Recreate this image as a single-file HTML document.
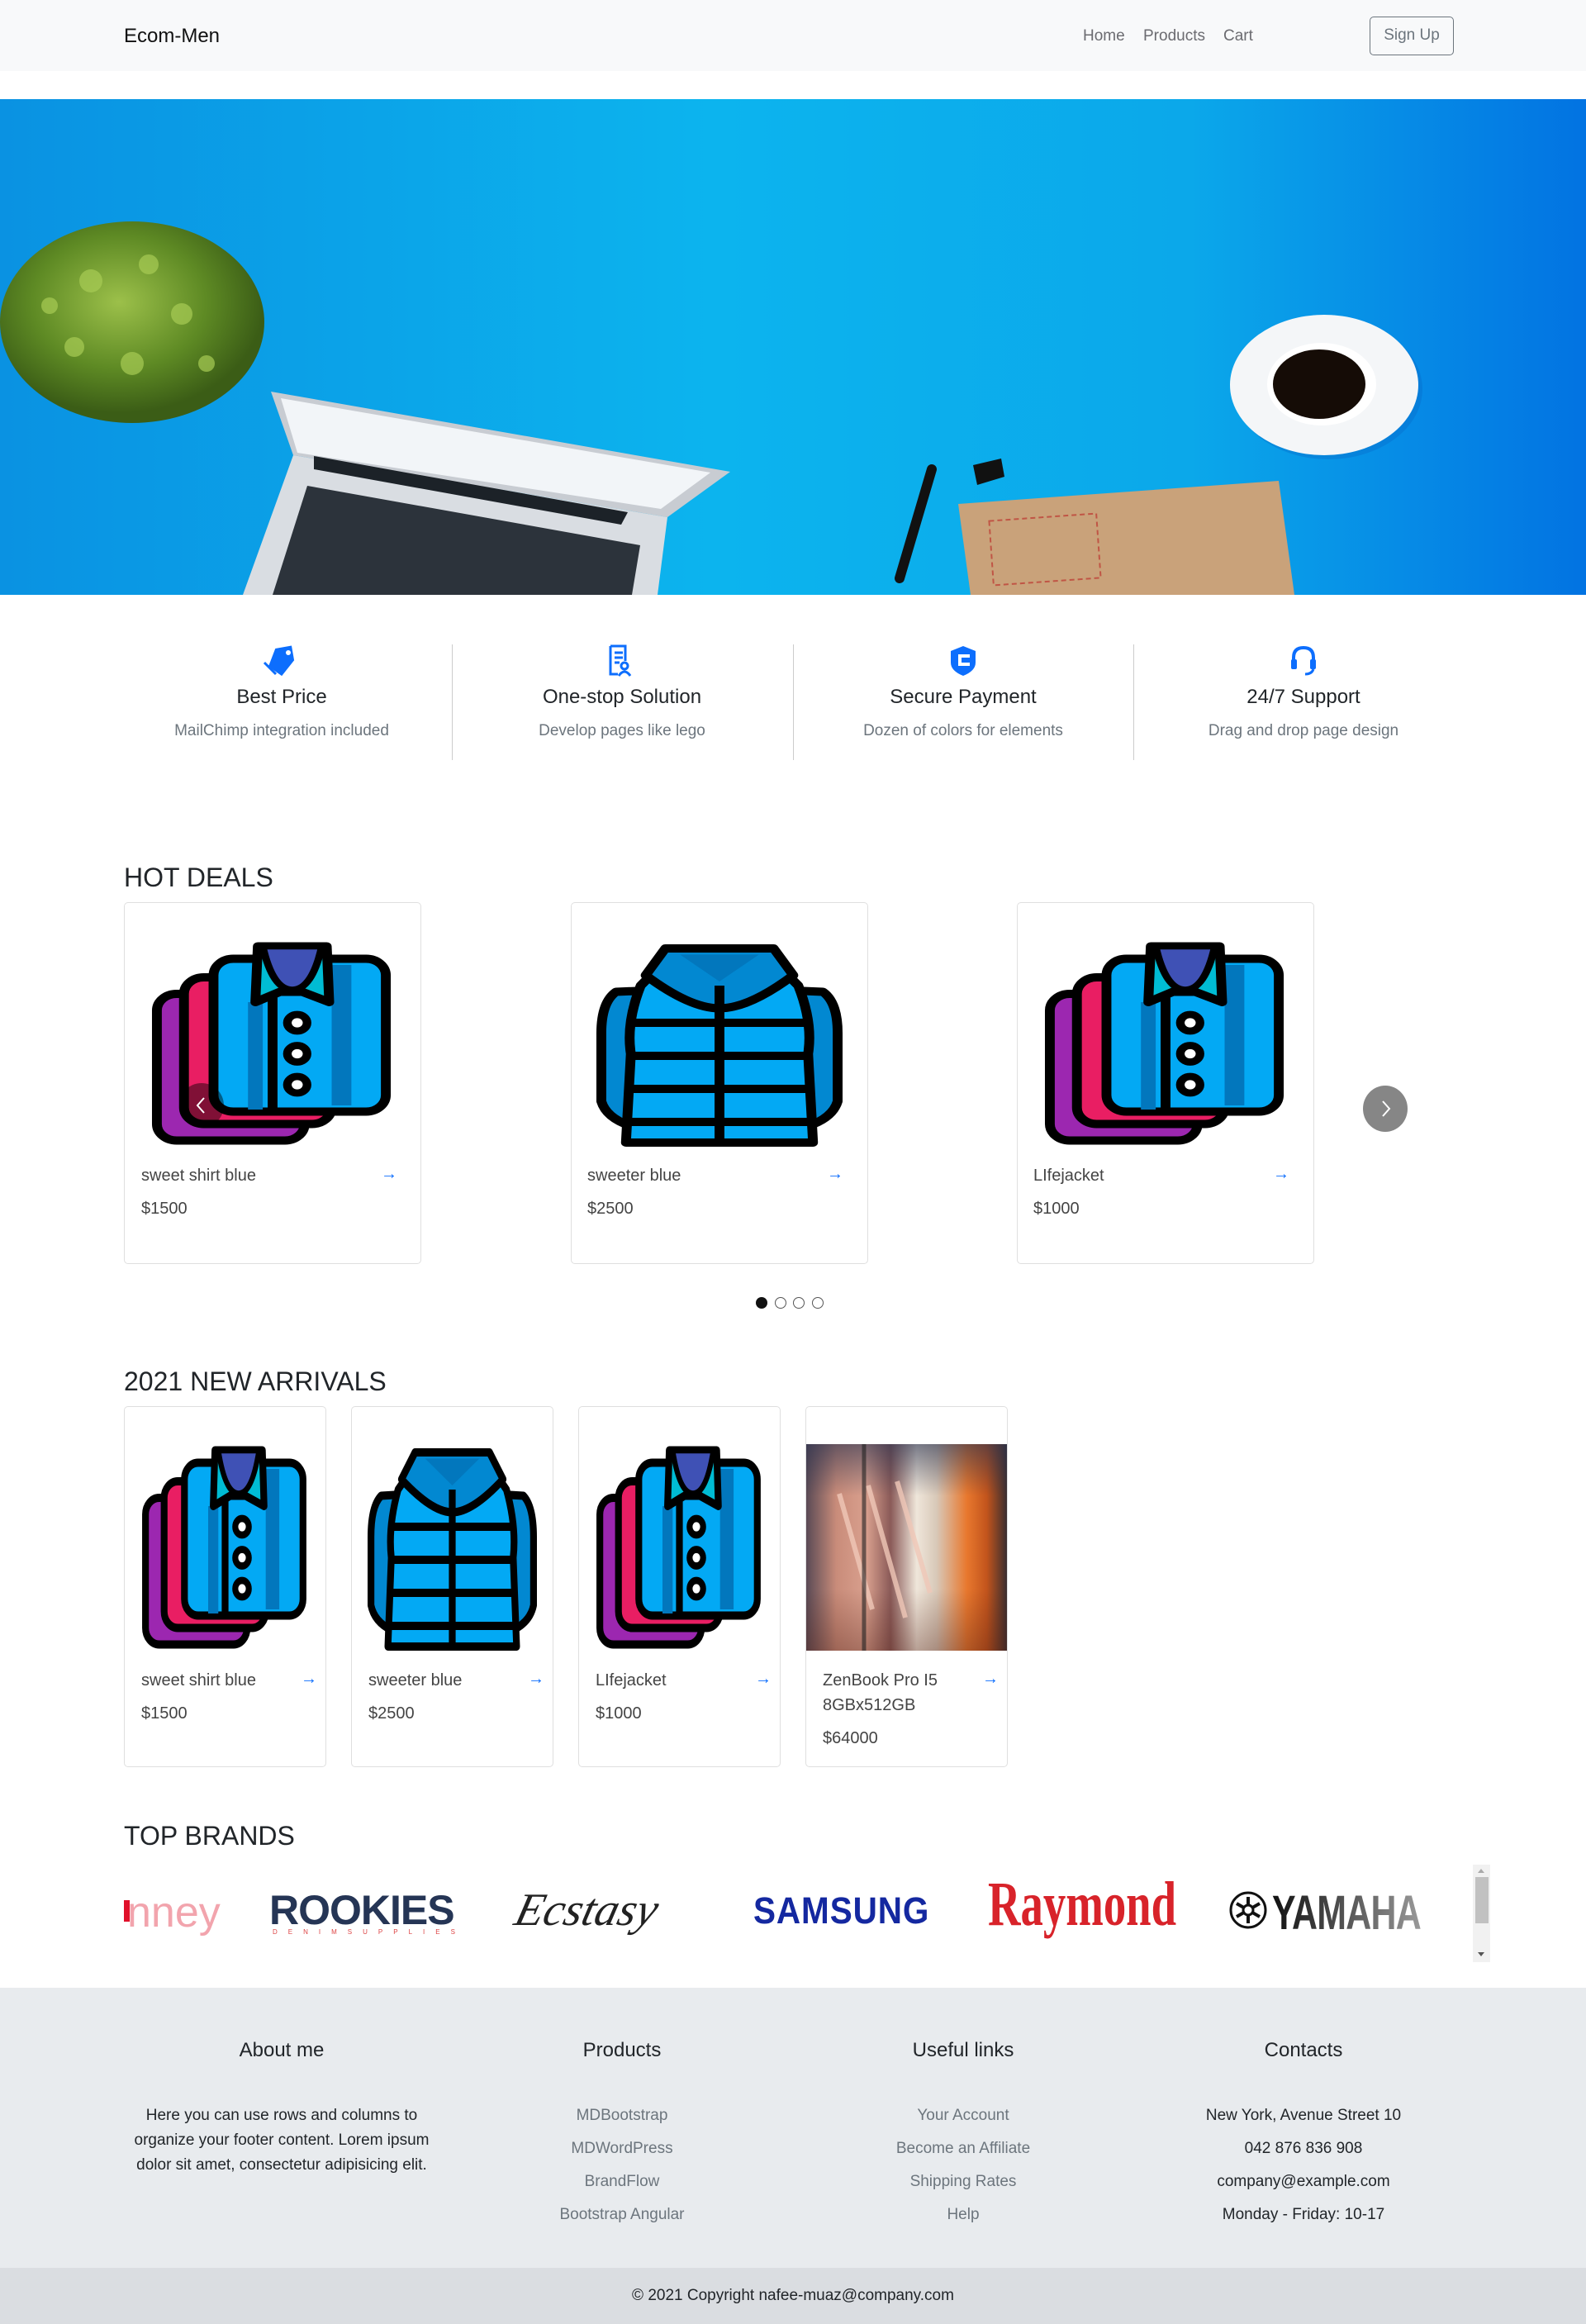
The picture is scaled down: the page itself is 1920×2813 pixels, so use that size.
<!DOCTYPE html>
<html><head><meta charset="utf-8"><style>
*{box-sizing:border-box;margin:0;padding:0}
body{width:1920px;height:2813px;position:relative;background:#fff;font-family:"Liberation Sans",sans-serif;color:#212529;overflow:hidden}
.a{position:absolute}
.nav{left:0;top:0;width:1920px;height:86px;background:#f8f9fa}
.t{white-space:nowrap}
.card{position:absolute;border:1px solid #dfdfdf;border-radius:5px;background:#fff}
.ttl{position:absolute;font-size:20px;color:#444}
.arr{position:absolute;font-size:20px;color:#0d6efd}
.h2{position:absolute;left:150px;font-size:32px;font-weight:500;color:#212529}
.fh{position:absolute;font-size:24px;text-align:center;width:412px;color:#212529}
.fp{position:absolute;font-size:19px;text-align:center;width:412px;color:#6c757d}
.foot{position:absolute;width:412px;text-align:center;font-size:19px;line-height:40px}
</style></head><body>
<svg width="0" height="0" style="position:absolute">
<defs>
<symbol id="shirt" viewBox="0 0 100 100" preserveAspectRatio="none">
<rect x="3" y="26" width="60" height="71" rx="8" fill="#9c27b0" stroke="#000" stroke-width="4"/>
<rect x="14" y="18" width="60" height="71" rx="8" fill="#e91e63" stroke="#000" stroke-width="4"/>
<rect x="26" y="9" width="70" height="74" rx="8" fill="#03a9f4" stroke="#000" stroke-width="4"/>
<rect x="74" y="12" width="8" height="68" fill="#0277bd"/>
<rect x="40" y="30" width="6" height="52" fill="#0277bd"/>
<path d="M44 3 L43 30 L53 25 L62 25 L73 30 L72 3 Z" fill="#00bcd4" stroke="#000" stroke-width="4" stroke-linejoin="round"/>
<path d="M46 3 Q50 24 58 24 Q66 24 70 3 Z" fill="#3f51b5" stroke="#000" stroke-width="3"/>
<line x1="50" y1="27" x2="50" y2="83" stroke="#000" stroke-width="4"/>
<circle cx="60" cy="40" r="4" fill="#fff" stroke="#000" stroke-width="3.5"/>
<circle cx="60" cy="55" r="4" fill="#fff" stroke="#000" stroke-width="3.5"/>
<circle cx="60" cy="70" r="4" fill="#fff" stroke="#000" stroke-width="3.5"/>
</symbol>
<symbol id="jacket" viewBox="0 0 100 100" preserveAspectRatio="none">
<path d="M8 25 Q2 30 2 45 L2 78 Q4 86 14 90 L28 93 L28 24 Z" fill="#0288d1" stroke="#000" stroke-width="4" stroke-linejoin="round"/>
<path d="M92 25 Q98 30 98 45 L98 78 Q96 86 86 90 L72 93 L72 24 Z" fill="#0288d1" stroke="#000" stroke-width="4" stroke-linejoin="round"/>
<path d="M28 10 L72 10 L82 22 Q88 40 86 55 L88 98 L12 98 L14 55 Q12 40 18 22 Z" fill="#03a9f4" stroke="#000" stroke-width="4" stroke-linejoin="round"/>
<path d="M28 4 L72 4 L80 17 Q62 33 50 33 Q38 33 20 17 Z" fill="#0288d1" stroke="#000" stroke-width="4" stroke-linejoin="round"/>
<path d="M34 7 L66 7 L50 20 Z" fill="#0277bd"/>
<line x1="50" y1="22" x2="50" y2="98" stroke="#000" stroke-width="4"/>
<line x1="14" y1="40" x2="86" y2="40" stroke="#000" stroke-width="4"/>
<line x1="14" y1="56" x2="86" y2="56" stroke="#000" stroke-width="4"/>
<line x1="14" y1="72" x2="86" y2="72" stroke="#000" stroke-width="4"/>
<line x1="12" y1="88" x2="88" y2="88" stroke="#000" stroke-width="4"/>
</symbol>
</defs></svg>

<div class="a nav"></div>
<div class="a t" style="left:150px;top:30px;font-size:24px;color:#111">Ecom-Men</div>
<div class="a t" style="left:1311px;top:33px;font-size:19px;color:#6b6b70">Home</div>
<div class="a t" style="left:1384px;top:33px;font-size:19px;color:#6b6b70">Products</div>
<div class="a t" style="left:1481px;top:33px;font-size:19px;color:#6b6b70">Cart</div>
<div class="a" style="left:1658px;top:20px;width:102px;height:47px;border:1.5px solid #6c757d;border-radius:5px;font-size:19px;color:#6c757d;text-align:center;line-height:44px">Sign Up</div>

<!-- hero -->
<div class="a" style="left:0;top:120px;width:1920px;height:600px;background:linear-gradient(90deg,#0a92e2 0%,#0cb4ee 45%,#0ba8ea 75%,#0273e2 100%)"></div>
<svg class="a" style="left:0;top:120px" width="1920" height="600">
<defs><radialGradient id="pl" cx="45%" cy="40%" r="55%"><stop offset="0" stop-color="#9cc04a"/><stop offset=".6" stop-color="#5e8a24"/><stop offset="1" stop-color="#3b5d16"/></radialGradient></defs>
<ellipse cx="175" cy="300" rx="100" ry="45" fill="#0a6fc0" opacity=".35"/>
<ellipse cx="160" cy="270" rx="160" ry="122" fill="url(#pl)"/>
<g fill="#a8cc55" opacity=".7"><circle cx="110" cy="220" r="14"/><circle cx="180" cy="200" r="12"/><circle cx="220" cy="260" r="13"/><circle cx="90" cy="300" r="12"/><circle cx="160" cy="320" r="14"/><circle cx="250" cy="320" r="10"/><circle cx="60" cy="250" r="10"/></g>
<polygon points="328,354 884,451 808,506 355,431" fill="#c8ccd2"/>
<polygon points="340,362 860,452 800,496 360,428" fill="#f2f5f8"/>
<g fill="#2a8fd8"><rect x="420" y="400" width="18" height="28" transform="skewY(10)"/><rect x="470" y="410" width="18" height="28" transform="skewY(10)"/><rect x="520" y="420" width="18" height="28" transform="skewY(10)"/></g>
<polygon points="355,431 808,506 796,600 294,600" fill="#d9dde2"/>
<polygon points="372,468 775,540 765,600 330,600" fill="#2c333b"/>
<polygon points="380,432 760,500 752,515 380,448" fill="#1c2228"/>
<line x1="1128" y1="448" x2="1089" y2="580" stroke="#111" stroke-width="12" stroke-linecap="round"/>
<polygon points="1178,443 1212,435 1216,457 1183,467" fill="#111"/>
<ellipse cx="1608" cy="351" rx="114" ry="85" fill="#0867c7" opacity=".35"/>
<ellipse cx="1603" cy="346" rx="114" ry="85" fill="#f4f6f8"/>
<ellipse cx="1600" cy="345" rx="66" ry="50" fill="#fff"/>
<ellipse cx="1597" cy="345" rx="56" ry="42" fill="#150c06"/>
<polygon points="1160,490 1548,462 1567,600 1175,600" fill="#c9a27a"/>
<rect x="1200" y="506" width="130" height="78" fill="none" stroke="#c05545" stroke-width="2" stroke-dasharray="6 4" transform="rotate(-4 1265 545)"/>
</svg>

<!-- features -->
<div class="a" style="left:547px;top:780px;width:1px;height:140px;background:#ccc"></div>
<div class="a" style="left:960px;top:780px;width:1px;height:140px;background:#ccc"></div>
<div class="a" style="left:1372px;top:780px;width:1px;height:140px;background:#ccc"></div>
<svg class="a" style="left:318px;top:780px" width="44" height="40" viewBox="0 0 44 40"><path d="M18 4 L38 4 L38 22 L20 38 L6 24 Z" fill="#0d6efd" transform="rotate(-10 22 20)"/><circle cx="31" cy="10" r="3" fill="#fff"/><path d="M2 22 L16 36" stroke="#0d6efd" stroke-width="3"/></svg>
<svg class="a" style="left:736px;top:780px" width="30" height="40" viewBox="0 0 30 40"><path d="M3 2 H21 V20 M12 36 H3 V2" fill="none" stroke="#0d6efd" stroke-width="3"/><path d="M8 10h10M8 16h10M8 22h6" stroke="#0d6efd" stroke-width="3"/><circle cx="20" cy="26" r="4" fill="none" stroke="#0d6efd" stroke-width="3"/><path d="M13 38 Q20 28 27 38" fill="none" stroke="#0d6efd" stroke-width="3"/></svg>
<svg class="a" style="left:1148px;top:780px" width="36" height="40" viewBox="0 0 36 40"><path d="M18 2 L33 8 L33 22 Q33 32 18 38 Q3 32 3 22 L3 8 Z" fill="#0d6efd"/><path d="M26 14 H14 V24 H26" fill="none" stroke="#fff" stroke-width="4"/></svg>
<svg class="a" style="left:1560px;top:780px" width="36" height="40" viewBox="0 0 36 40"><path d="M6 22 V16 Q6 4 18 4 Q30 4 30 16 V22" fill="none" stroke="#0d6efd" stroke-width="4"/><rect x="3" y="18" width="7" height="12" rx="2" fill="#0d6efd"/><rect x="26" y="18" width="7" height="12" rx="2" fill="#0d6efd"/><path d="M30 30 Q28 36 20 36" fill="none" stroke="#0d6efd" stroke-width="3"/></svg>
<div class="fh" style="left:135px;top:830px">Best Price</div>
<div class="fh" style="left:547px;top:830px">One-stop Solution</div>
<div class="fh" style="left:960px;top:830px">Secure Payment</div>
<div class="fh" style="left:1372px;top:830px">24/7 Support</div>
<div class="fp" style="left:135px;top:874px">MailChimp integration included</div>
<div class="fp" style="left:547px;top:874px">Develop pages like lego</div>
<div class="fp" style="left:960px;top:874px">Dozen of colors for elements</div>
<div class="fp" style="left:1372px;top:874px">Drag and drop page design</div>

<!-- hot deals -->
<div class="h2" style="top:1044px">HOT DEALS</div>
<div class="card" style="left:150px;top:1092px;width:360px;height:438px"></div>
<div class="card" style="left:691px;top:1092px;width:360px;height:438px"></div>
<div class="card" style="left:1231px;top:1092px;width:360px;height:438px"></div>
<svg class="a" style="left:181px;top:1138px" width="298" height="250"><use href="#shirt"/></svg>
<svg class="a" style="left:722px;top:1138px" width="298" height="250"><use href="#jacket"/></svg>
<svg class="a" style="left:1262px;top:1138px" width="298" height="250"><use href="#shirt"/></svg>
<div class="ttl" style="left:171px;top:1412px">sweet shirt blue</div><div class="arr" style="left:461px;top:1410px">→</div>
<div class="ttl" style="left:171px;top:1452px">$1500</div>
<div class="ttl" style="left:711px;top:1412px">sweeter blue</div><div class="arr" style="left:1001px;top:1410px">→</div>
<div class="ttl" style="left:711px;top:1452px">$2500</div>
<div class="ttl" style="left:1251px;top:1412px">LIfejacket</div><div class="arr" style="left:1541px;top:1410px">→</div>
<div class="ttl" style="left:1251px;top:1452px">$1000</div>
<div class="a" style="left:217px;top:1311px;width:54px;height:54px;border-radius:50%;background:rgba(0,0,0,.45)"></div>
<svg class="a" style="left:232px;top:1326px" width="24" height="24"><path d="M15 3 L7 12 L15 21" fill="none" stroke="#fff" stroke-width="2"/></svg>
<div class="a" style="left:1650px;top:1314px;width:54px;height:56px;border-radius:50%;background:#868686"></div>
<svg class="a" style="left:1665px;top:1330px" width="24" height="24"><path d="M9 3 L17 12 L9 21" fill="none" stroke="#fff" stroke-width="2"/></svg>
<div class="a" style="left:915px;top:1570px;width:14px;height:14px;border-radius:50%;background:#111"></div>
<div class="a" style="left:938px;top:1570px;width:14px;height:14px;border-radius:50%;border:1.5px solid #555"></div>
<div class="a" style="left:960px;top:1570px;width:14px;height:14px;border-radius:50%;border:1.5px solid #555"></div>
<div class="a" style="left:983px;top:1570px;width:14px;height:14px;border-radius:50%;border:1.5px solid #555"></div>

<!-- new arrivals -->
<div class="h2" style="top:1654px">2021 NEW ARRIVALS</div>
<div class="card" style="left:150px;top:1702px;width:245px;height:437px"></div>
<div class="card" style="left:425px;top:1702px;width:245px;height:437px"></div>
<div class="card" style="left:700px;top:1702px;width:245px;height:437px"></div>
<div class="card" style="left:975px;top:1702px;width:245px;height:437px"></div>
<svg class="a" style="left:170px;top:1748px" width="205" height="250"><use href="#shirt"/></svg>
<svg class="a" style="left:445px;top:1748px" width="205" height="250"><use href="#jacket"/></svg>
<svg class="a" style="left:720px;top:1748px" width="205" height="250"><use href="#shirt"/></svg>
<div class="a" style="left:976px;top:1748px;width:243px;height:250px;background:linear-gradient(90deg,#5a4a55 0%,#c98c7a 15%,#d9a08e 30%,#8a5a58 42%,#efe6da 55%,#d8c8b8 65%,#e8782e 80%,#c2541c 90%,#3a2e30 100%)"></div>
<div class="a" style="left:976px;top:1748px;width:243px;height:250px;background:linear-gradient(180deg,rgba(40,50,80,.6) 0%,rgba(255,255,255,0) 25%,rgba(0,0,0,0) 70%,rgba(80,30,20,.35) 100%)"></div>
<svg class="a" style="left:976px;top:1748px" width="243" height="250"><g stroke="#f0c8b8" stroke-width="6" fill="none" opacity=".8"><path d="M40 60 L80 200"/><path d="M75 50 L120 210"/><path d="M110 45 L150 180"/></g><line x1="70" y1="0" x2="70" y2="250" stroke="#222" stroke-width="5" opacity=".6"/></svg>
<div class="ttl" style="left:171px;top:2023px">sweet shirt blue</div><div class="arr" style="left:364px;top:2021px">→</div>
<div class="ttl" style="left:171px;top:2063px">$1500</div>
<div class="ttl" style="left:446px;top:2023px">sweeter blue</div><div class="arr" style="left:639px;top:2021px">→</div>
<div class="ttl" style="left:446px;top:2063px">$2500</div>
<div class="ttl" style="left:721px;top:2023px">LIfejacket</div><div class="arr" style="left:914px;top:2021px">→</div>
<div class="ttl" style="left:721px;top:2063px">$1000</div>
<div class="ttl" style="left:996px;top:2023px">ZenBook Pro I5</div><div class="arr" style="left:1189px;top:2021px">→</div>
<div class="ttl" style="left:996px;top:2053px">8GBx512GB</div>
<div class="ttl" style="left:996px;top:2093px">$64000</div>

<!-- brands -->
<div class="h2" style="top:2204px">TOP BRANDS</div>
<div class="a t" style="left:154px;top:2285px;font-size:52px;color:#f2a4ad">nney</div>
<div class="a" style="left:150px;top:2300px;width:7px;height:26px;background:#e0102a"></div>
<div class="a t" style="left:326px;top:2283px;font-size:50px;font-weight:bold;color:#253555;letter-spacing:-1px">ROOKIES</div>
<div class="a t" style="left:330px;top:2334px;font-size:8px;color:#d44;letter-spacing:13px">DENIMSUPPLIES</div>
<div class="a t" style="left:625px;top:2280px;font-size:56px;font-style:italic;font-family:'Liberation Serif',serif;color:#222;transform:skewX(-14deg)">Ecstasy</div>
<div class="a t" style="left:912px;top:2287px;font-size:45px;font-weight:bold;color:#1428a0;letter-spacing:1px;transform:scaleX(0.9);transform-origin:left">SAMSUNG</div>
<div class="a t" style="left:1196px;top:2262px;font-size:76px;font-weight:bold;font-family:'Liberation Serif',serif;color:#d8232a;transform:scaleX(0.72);transform-origin:left">Raymond</div>
<svg class="a" style="left:1487px;top:2288px" width="48" height="48" viewBox="0 0 48 48"><circle cx="24" cy="24" r="21" fill="none" stroke="#111" stroke-width="3"/><path d="M24 8V40M10 16L38 32M38 16L10 32" stroke="#111" stroke-width="4"/><circle cx="24" cy="24" r="6" fill="#fff" stroke="#111" stroke-width="3"/></svg>
<div class="a t" style="left:1540px;top:2282px;font-size:58px;font-weight:bold;background:linear-gradient(90deg,#111,#999);-webkit-background-clip:text;background-clip:text;color:transparent;transform:scaleX(0.74);transform-origin:left;letter-spacing:-1px">YAMAHA</div>
<div class="a" style="left:1783px;top:2257px;width:21px;height:118px;background:#f1f1f1"></div>
<div class="a" style="left:1786px;top:2272px;width:16px;height:56px;background:#c1c1c1"></div>
<div class="a" style="left:1789px;top:2262px;width:0;height:0;border-left:4px solid transparent;border-right:4px solid transparent;border-bottom:5px solid #aaa"></div>
<div class="a" style="left:1789px;top:2363px;width:0;height:0;border-left:4px solid transparent;border-right:4px solid transparent;border-top:5px solid #555"></div>

<!-- footer -->
<div class="a" style="left:0;top:2406px;width:1920px;height:339px;background:#e8ebee"></div>
<div class="a" style="left:0;top:2745px;width:1920px;height:68px;background:#dadde1"></div>
<div class="fh" style="left:135px;top:2468px">About me</div>
<div class="fh" style="left:547px;top:2468px">Products</div>
<div class="fh" style="left:960px;top:2468px">Useful links</div>
<div class="fh" style="left:1372px;top:2468px">Contacts</div>
<div class="a" style="left:150px;top:2546px;width:382px;text-align:center;font-size:19px;line-height:30px;color:#212529">Here you can use rows and columns to organize your footer content. Lorem ipsum dolor sit amet, consectetur adipisicing elit.</div>
<div class="foot" style="left:547px;top:2541px;color:#6c757d">MDBootstrap<br>MDWordPress<br>BrandFlow<br>Bootstrap Angular</div>
<div class="foot" style="left:960px;top:2541px;color:#6c757d">Your Account<br>Become an Affiliate<br>Shipping Rates<br>Help</div>
<div class="foot" style="left:1372px;top:2541px;color:#212529">New York, Avenue Street 10<br>042 876 836 908<br>company@example.com<br>Monday - Friday: 10-17</div>
<div class="a t" style="left:0;top:2768px;width:1920px;text-align:center;font-size:19px;color:#212529">© 2021 Copyright nafee-muaz@company.com</div>
</body></html>
